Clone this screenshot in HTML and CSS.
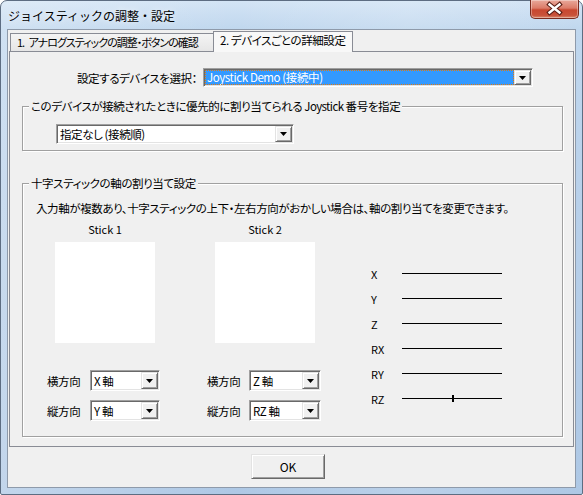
FILE: index.html
```html
<!DOCTYPE html>
<html lang="ja">
<head>
<meta charset="utf-8">
<title>ジョイスティックの調整・設定</title>
<link rel="stylesheet" href="styles.css">
</head>
<body>
<div class="window">
  <div class="titlebar">
    <span class="title">ジョイスティックの調整・設定</span>
    <div class="close">
      <svg width="49" height="19" viewBox="0 0 49 19">
        <path d="M19.5 5.5 L29.5 13.5 M29.5 5.5 L19.5 13.5" stroke="#5b1f16" stroke-width="4.6" stroke-linecap="square" fill="none"/>
        <path d="M19.5 5.5 L29.5 13.5 M29.5 5.5 L19.5 13.5" stroke="#ffffff" stroke-width="2.4" stroke-linecap="square" fill="none"/>
      </svg>
    </div>
  </div>
  <div class="client">
    <div class="tabctl">
      <div class="tabstrip">
        <div class="tab tab-first">1. アナログスティックの調整・ボタンの確認</div>
        <div class="tab active">2. デバイスごとの詳細設定</div>
      </div>
      <div class="panel">
        <div class="device-row">
          <span class="device-label">設定するデバイスを選択：</span>
          <div class="combo combo-device">
            <div class="val"><span class="sel">Joystick Demo (接続中)</span></div>
            <div class="btn"><svg width="7" height="4" viewBox="0 0 7 4"><path d="M0 0H7L3.5 4Z" fill="#000"/></svg></div>
          </div>
        </div>
        <div class="group group1">
          <span class="legend">このデバイスが接続されたときに優先的に割り当てられる <span class="latin">Joystick</span> 番号を指定</span>
          <div class="combo combo-num">
            <div class="val">指定なし (接続順)</div>
            <div class="btn"><svg width="7" height="4" viewBox="0 0 7 4"><path d="M0 0H7L3.5 4Z" fill="#000"/></svg></div>
          </div>
        </div>
        <div class="group group2">
          <span class="legend">十字スティックの軸の割り当て設定</span>
          <p class="desc">入力軸が複数あり、十字スティックの上下・左右方向がおかしい場合は、軸の割り当てを変更できます。</p>
          <div class="sticks">
            <div class="stick stick1">
              <div class="stick-title">Stick 1</div>
              <div class="pad"></div>
              <div class="axis-sel first">
                <span class="axis-label">横方向</span>
                <div class="combo combo-axis">
                  <div class="val">X 軸</div>
                  <div class="btn"><svg width="7" height="4" viewBox="0 0 7 4"><path d="M0 0H7L3.5 4Z" fill="#000"/></svg></div>
                </div>
              </div>
              <div class="axis-sel">
                <span class="axis-label">縦方向</span>
                <div class="combo combo-axis">
                  <div class="val">Y 軸</div>
                  <div class="btn"><svg width="7" height="4" viewBox="0 0 7 4"><path d="M0 0H7L3.5 4Z" fill="#000"/></svg></div>
                </div>
              </div>
            </div>
            <div class="stick stick2">
              <div class="stick-title">Stick 2</div>
              <div class="pad"></div>
              <div class="axis-sel first">
                <span class="axis-label">横方向</span>
                <div class="combo combo-axis">
                  <div class="val">Z 軸</div>
                  <div class="btn"><svg width="7" height="4" viewBox="0 0 7 4"><path d="M0 0H7L3.5 4Z" fill="#000"/></svg></div>
                </div>
              </div>
              <div class="axis-sel">
                <span class="axis-label">縦方向</span>
                <div class="combo combo-axis">
                  <div class="val">RZ 軸</div>
                  <div class="btn"><svg width="7" height="4" viewBox="0 0 7 4"><path d="M0 0H7L3.5 4Z" fill="#000"/></svg></div>
                </div>
              </div>
            </div>
            <div class="axes">
              <div class="axis-row"><span class="axis-name">X</span><div class="track"></div></div>
              <div class="axis-row"><span class="axis-name">Y</span><div class="track"></div></div>
              <div class="axis-row"><span class="axis-name">Z</span><div class="track"></div></div>
              <div class="axis-row"><span class="axis-name">RX</span><div class="track"></div></div>
              <div class="axis-row"><span class="axis-name">RY</span><div class="track"></div></div>
              <div class="axis-row"><span class="axis-name">RZ</span><div class="track"><span class="marker" style="left:50px"></span></div></div>
            </div>
          </div>
        </div>
      </div>
    </div>
    <div class="footer">
      <button class="ok">OK</button>
    </div>
  </div>
</div>
</body>
</html>
```
FILE: styles.css
```css
html, body {
  margin: 0;
  padding: 0;
}
body {
  width: 583px;
  height: 495px;
  overflow: hidden;
  background: #ffffff;
  font-family: "Noto Sans CJK JP", "Noto Sans", sans-serif;
  font-size: 11.5px;
  letter-spacing: -0.4px;
  color: #000;
}
.window {
  box-sizing: border-box;
  width: 583px;
  height: 495px;
  border: 1px solid #5d6d82;
  border-radius: 7px 7px 2px 2px;
  background: linear-gradient(90deg, rgba(255,255,255,0.25), rgba(255,255,255,0) 40%, rgba(255,255,255,0.15) 70%, rgba(255,255,255,0)),
              linear-gradient(180deg, #d3e4f5 0px, #c0d7ee 28px, #b8d0ea 200px, #aec8e5 495px);
  display: flex;
  flex-direction: column;
  padding: 0 6px 6px 6px;
}
.titlebar {
  height: 28px;
  flex: none;
  display: flex;
  align-items: center;
  position: relative;
}
.title {
  margin-left: 1px;
  padding-top: 2px;
  font-size: 12px;
  letter-spacing: 0;
  line-height: 16px;
  color: #000;
  text-shadow: 0 0 6px rgba(255,255,255,0.9);
}
.close {
  position: absolute;
  top: -1px;
  right: -3px;
  width: 49px;
  height: 19px;
  box-sizing: border-box;
  border: 1px solid #7a2b1f;
  border-top: none;
  border-radius: 0 0 5px 5px;
  background: linear-gradient(180deg, #e9a99b 0%, #dc7b68 45%, #c84730 55%, #c9523a 85%, #d98a6d 100%);
  box-shadow: inset 0 0 0 1px rgba(255,255,255,0.35);
  overflow: hidden;
}
.close svg {
  display: block;
  margin: -1px 0 0 -1px;
}
.client {
  flex: 1;
  box-sizing: border-box;
  background: #f0f0f0;
  border: 1px solid #8e9aaa;
  display: flex;
  flex-direction: column;
}
.tabctl {
  margin-left: 1px;
  width: 565px;
}
.tabstrip {
  height: 21px;
  display: flex;
  align-items: flex-end;
  padding-left: 1px;
}
.tab {
  box-sizing: border-box;
  height: 18px;
  border: 1px solid #898c95;
  border-bottom: none;
  background: linear-gradient(180deg, #f4f4f4, #e6e6e6);
  line-height: 16px;
  padding-left: 6px;
  white-space: nowrap;
  overflow: hidden;
  font-feature-settings: "palt";
}
.tab-first {
  width: 204px;
  font-size: 11px;
  letter-spacing: -1px;
  word-spacing: 3px;
}
.tab.active {
  width: 140px;
  height: 21px;
  margin-left: -1px;
  position: relative;
  top: 1px;
  z-index: 1;
  background: #f8f8f8;
  padding-left: 6px;
  line-height: 17px;
}
.panel {
  box-sizing: border-box;
  height: 396px;
  border: 1px solid #898c95;
  background: #f0f0f0;
  padding-top: 16px;
}
.device-row {
  display: flex;
  align-items: center;
  padding-left: 66px;
}
.device-label {
  width: 121px;
  margin-right: 6px;
  text-align: right;
  white-space: nowrap;
  font-feature-settings: "palt";
  line-height: 16px;
}
.combo {
  box-sizing: border-box;
  display: flex;
  background: #fff;
  border: 1px solid;
  border-color: #a0a0a0 #ffffff #ffffff #a0a0a0;
  box-shadow: inset 1px 1px 0 #696969, inset -1px -1px 0 #e3e3e3;
  padding: 1px;
}
.combo .val {
  flex: 1;
  display: flex;
  align-items: center;
  padding-left: 2px;
  white-space: nowrap;
  overflow: hidden;
  font-feature-settings: "palt";
  line-height: 14px;
}
.combo .btn {
  box-sizing: border-box;
  width: 17px;
  flex: none;
  background: #f0f0f0;
  border: 1px solid;
  border-color: #e3e3e3 #696969 #696969 #e3e3e3;
  box-shadow: inset 1px 1px 0 #ffffff, inset -1px -1px 0 #a0a0a0;
  display: flex;
  align-items: center;
  justify-content: center;
}
.combo .btn svg {
  display: block;
}
.combo-device {
  width: 330px;
  height: 19px;
}
.combo-device .val {
  padding: 0;
}
.combo-device .sel {
  flex: 1;
  align-self: stretch;
  background: #3399ff;
  color: #fff;
  outline: 1px dotted #e07a10;
  outline-offset: -1px;
  padding-left: 2px;
  line-height: 15px;
}
.group {
  position: relative;
  box-sizing: border-box;
  margin-left: 12px;
  width: 541px;
  border: 1px solid #a0a0a0;
  box-shadow: inset 1px 1px 0 #ffffff, 1px 1px 0 #ffffff;
}
.legend {
  position: absolute;
  top: -9px;
  left: 6px;
  padding: 0 2px;
  background: #f0f0f0;
  line-height: 16px;
  white-space: nowrap;
  font-feature-settings: "palt";
}
.latin {
  letter-spacing: -0.6px;
}
.group1 {
  margin-top: 19px;
  height: 45px;
  padding: 17px 0 0 33px;
}
.combo-num {
  width: 238px;
  height: 20px;
}
.group2 {
  margin-top: 32px;
  height: 254px;
  padding: 16px 0 0 13px;
}
.desc {
  margin: 0;
  line-height: 16px;
  white-space: nowrap;
  font-feature-settings: "palt";
}
.sticks {
  display: flex;
  align-items: flex-start;
  margin-top: 5px;
  padding-left: 11px;
}
.stick1 {
  width: 113px;
}
.stick2 {
  width: 114px;
  margin-left: 47px;
}
.stick-title {
  width: 100px;
  margin-left: 8px;
  text-align: center;
  line-height: 16px;
  font-size: 11px;
  letter-spacing: 0;
}
.pad {
  width: 100px;
  height: 101px;
  margin: 5px 0 0 8px;
  background: #ffffff;
}
.axis-sel {
  display: flex;
  justify-content: space-between;
  align-items: center;
  margin-top: 9px;
}
.axis-sel.first {
  margin-top: 27px;
}
.axis-label {
  line-height: 16px;
  white-space: nowrap;
}
.combo-axis {
  height: 21px;
}
.stick1 .combo-axis {
  width: 70px;
}
.stick2 .combo-axis {
  width: 72px;
}
.axes {
  margin-left: 50px;
  margin-top: 40px;
}
.axis-row {
  height: 25px;
  display: flex;
  align-items: center;
}
.axis-name {
  width: 31px;
  font-size: 11px;
  letter-spacing: 0;
  line-height: 16px;
}
.track {
  position: relative;
  width: 100px;
  height: 1px;
  background: #000;
}
.marker {
  position: absolute;
  top: -3px;
  width: 2px;
  height: 7px;
  background: #000;
}
.footer {
  flex: 1;
  padding: 7px 0 0 243px;
}
.ok {
  box-sizing: border-box;
  width: 74px;
  height: 25px;
  margin: 0;
  padding: 0;
  font-family: "Noto Sans CJK JP", "Noto Sans", sans-serif;
  font-size: 12px;
  color: #000;
  background: #f0f0f0;
  border: 1px solid;
  border-color: #e3e3e3 #696969 #696969 #e3e3e3;
  box-shadow: inset 1px 1px 0 #ffffff, inset -1px -1px 0 #a0a0a0;
}
```
